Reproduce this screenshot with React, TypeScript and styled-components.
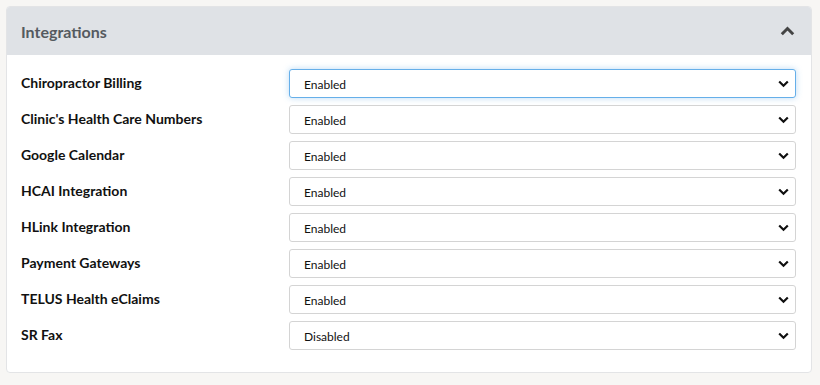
import React from "react";
import styled, { createGlobalStyle, css } from "styled-components";

const Global = createGlobalStyle`
  html, body { margin: 0; padding: 0; background: #f7f6f4; }
  body { font-family: Lato, "Open Sans", sans-serif; }
  * { box-sizing: border-box; }
`;

const Card = styled.section`
  margin: 6px 8px 0 6px;
  background: #fff;
  border: 1px solid #e3e4e6;
  border-radius: 4px;
  overflow: hidden;
`;

const Header = styled.header`
  height: 48px;
  background: #dfe2e6;
  display: flex;
  align-items: center;
  justify-content: space-between;
  padding: 0 16px 0 14px;
`;

const Title = styled.h2`
  margin: 0;
  font-size: 16px;
  font-weight: 700;
  color: #555a60;
`;

const Body = styled.div`
  padding: 14px 15px 22px 14px;
  display: flex;
  flex-direction: column;
  gap: 7px;
`;

const Row = styled.div`
  display: grid;
  grid-template-columns: 268px 1fr;
  align-items: center;
  height: 29px;
`;

const Label = styled.label`
  font-size: 14px;
  font-weight: 700;
  color: #111;
  padding-bottom: 3px;
`;

const SelectWrap = styled.div`
  position: relative;
  height: 29px;
`;

const Select = styled.select<{ $focused?: boolean }>`
  appearance: none;
  -webkit-appearance: none;
  width: 100%;
  height: 29px;
  padding: 1px 30px 0 14px;
  border: 1px solid #d4d4d4;
  border-radius: 3px;
  background: #fff;
  font-family: Lato, "Open Sans", sans-serif;
  font-size: 12px;
  color: #111;
  outline: none;
  ${(p) =>
    p.$focused &&
    css`
      border-color: #66afe9;
      box-shadow: 0 0 6px rgba(102, 175, 233, 0.45);
    `}
`;

const Caret = styled.svg`
  position: absolute;
  right: 7px;
  top: 11px;
  width: 11px;
  height: 8px;
  pointer-events: none;
`;

const Chevron = () => (
  <Caret viewBox="0 0 11 8">
    <path d="M1.2 1.5 L5.5 5.8 L9.8 1.5" fill="none" stroke="#111" strokeWidth="2.2" />
  </Caret>
);

const ToggleIcon = styled.svg`
  width: 15px;
  height: 10px;
  margin-top: -1px;
`;

const items: [string, string][] = [
  ["Chiropractor Billing", "Enabled"],
  ["Clinic's Health Care Numbers", "Enabled"],
  ["Google Calendar", "Enabled"],
  ["HCAI Integration", "Enabled"],
  ["HLink Integration", "Enabled"],
  ["Payment Gateways", "Enabled"],
  ["TELUS Health eClaims", "Enabled"],
  ["SR Fax", "Disabled"],
];

export default function App() {
  return (
    <>
      <Global />
      <Card>
        <Header>
          <Title>Integrations</Title>
          <ToggleIcon viewBox="0 0 15 10">
            <path d="M1.8 8.2 L7.5 2.5 L13.2 8.2" fill="none" stroke="#444" strokeWidth="3" />
          </ToggleIcon>
        </Header>
        <Body>
          {items.map(([label, value], i) => (
            <Row key={label}>
              <Label>{label}</Label>
              <SelectWrap>
                <Select $focused={i === 0} defaultValue={value}>
                  <option>Enabled</option>
                  <option>Disabled</option>
                </Select>
                <Chevron />
              </SelectWrap>
            </Row>
          ))}
        </Body>
      </Card>
    </>
  );
}
